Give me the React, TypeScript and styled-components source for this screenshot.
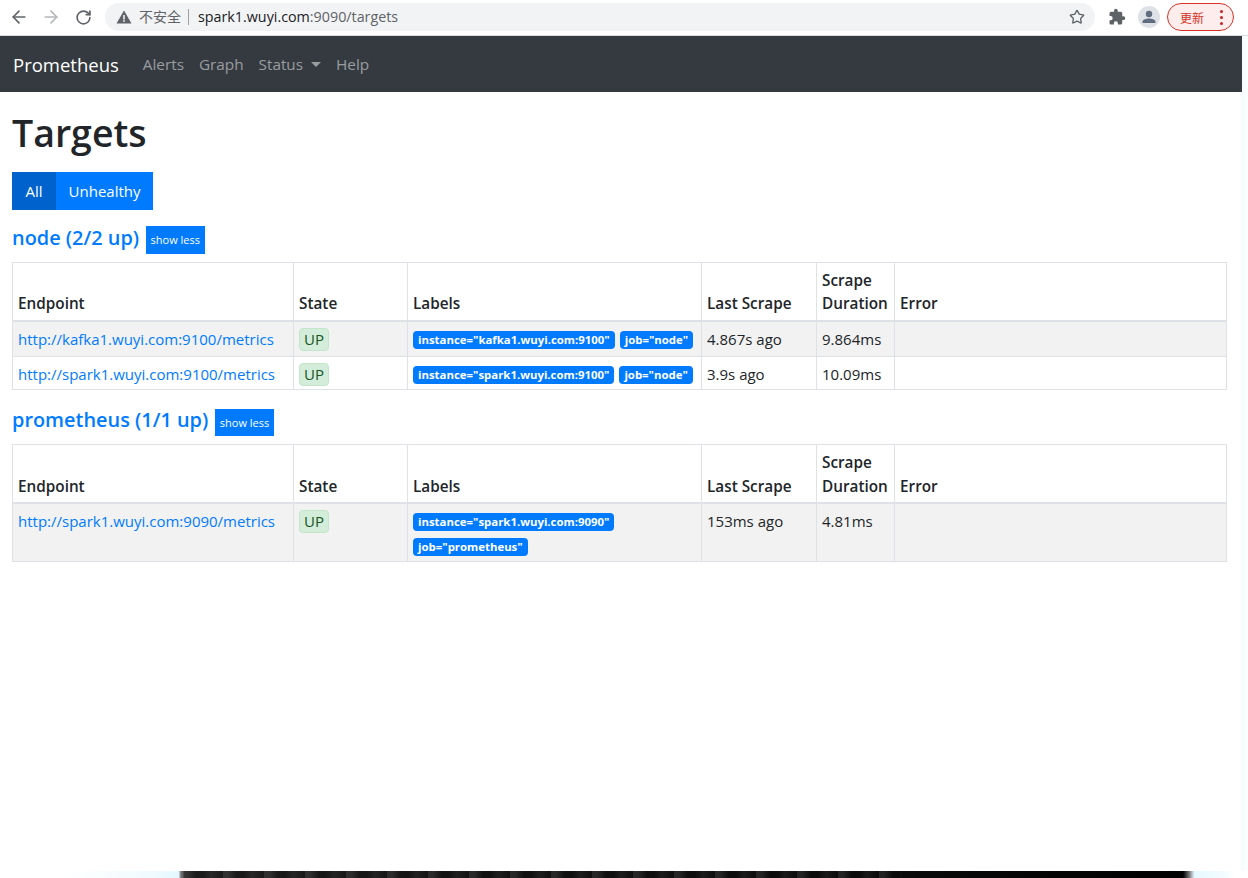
import React from 'react';
import styled, { createGlobalStyle } from 'styled-components';
import { ArrowLeft, ArrowRight, RotateCw, Star } from 'lucide-react';

const Global = createGlobalStyle`
  html, body { margin: 0; padding: 0; background: #fff; }
  body { font-family: "Open Sans", "Noto Sans CJK SC", sans-serif; font-size: 15px; color: #212529; }
  * { box-sizing: border-box; }
`;

const Page = styled.div`
  width: 1248px; height: 878px; overflow: hidden;
  display: flex; flex-direction: column;
  background: linear-gradient(90deg, #fff 1240px, #f4fcff 1242px, #fbfeff 1247px);
`;
const ChromeBar = styled.div`
  height: 36px; flex: none; display: flex; align-items: center;
  padding: 0 14px 1px 9px; background: #fff; border-bottom: 1px solid #dadce0;
`;
const NavIcon = styled.span<{ $c: string }>`
  width: 20px; height: 20px; margin-right: 12px; display: flex; align-items: center; justify-content: center; color: ${p => p.$c};
`;
const Omnibox = styled.div`
  width: 990px; height: 28px; border-radius: 14px; background: #f1f3f4;
  display: flex; align-items: center; padding: 0 10px 0 11px; font-size: 14.3px; color: #5f6368;
`;
const Warn = styled.svg`width: 16px; height: 16px; margin-right: 7px; flex: none;`;
const Insecure = styled.span`font-family: "Noto Sans CJK SC", sans-serif; font-size: 14px; color: #5f6368; margin-bottom: 2px;`;
const Sep = styled.span`width: 1px; height: 16px; background: #9aa0a6; margin: 0 9px 0 7px;`;
const Address = styled.span`margin-bottom: 2px;`;
const Host = styled.span`color: #202124;`;
const Spacer = styled.span`flex: 1;`;
const Ext = styled.svg`width: 18px; height: 18px; margin-left: 13px; flex: none;`;
const Avatar = styled.span`
  width: 22px; height: 22px; border-radius: 50%; background: #dee1e6; margin-left: 12px; flex: none;
  display: flex; align-items: center; justify-content: center;
`;
const Update = styled.span`
  width: 67px; height: 28px; margin-left: 7px; border: 1px solid #d93025; border-radius: 14px; background: #fdeeed;
  display: flex; align-items: center; justify-content: space-between; padding: 0 10px 0 12px;
  color: #d93025; font-family: "Noto Sans CJK SC", sans-serif; font-size: 12px; flex: none;
`;
const Dots = styled.span`display: flex; flex-direction: column; gap: 3px;`;
const Dot = styled.i`width: 3px; height: 3px; border-radius: 50%; background: #c5221f; display: block;`;

const Navbar = styled.nav`
  height: 56px; flex: none; width: 1242px; background: #343a40; display: flex; align-items: center; padding: 0 13px;
`;
const Brand = styled.span`color: #fff; font-size: 18.5px; margin-right: 24px;`;
const NavLink = styled.span`color: rgba(255,255,255,.5); font-size: 15.3px; margin-right: 15px; display: inline-flex; align-items: center;`;
const Caret = styled.i`
  display: inline-block; margin-left: 8px; border-top: 5px solid; border-left: 5px solid transparent; border-right: 5px solid transparent;
`;

const Main = styled.main`padding: 0 21px 0 12px; width: 1239px;`;
const Title = styled.h1`margin: 16px 0 14px; font-size: 37.5px; line-height: 50px; font-weight: 600; color: #212529;`;
const Group = styled.div`display: flex; height: 38px; width: max-content;`;
const Toggle = styled.span<{ $active?: boolean }>`
  height: 38px; display: flex; align-items: center; color: #fff; font-size: 15px;
  padding: 0 ${p => (p.$active ? '13.5px' : '12.5px')};
  background: ${p => (p.$active ? '#0062cc' : '#007bff')};
`;
const Head = styled.div`display: flex; align-items: center; margin-top: 16px; height: 27.5px;`;
const JobTitle = styled.a`color: #007bff; font-size: 19.9px; font-weight: 600; line-height: 27px; margin-bottom: 5px;`;
const Less = styled.span`
  margin-left: 6.5px; height: 27.5px; padding: 0 5px; display: flex; align-items: center; background: #007bff; color: #fff; font-size: 11px;
`;
const Table = styled.table`
  width: 1215px; table-layout: fixed; border-collapse: collapse; margin-top: 8px; margin-bottom: 18.5px;
  border: 1px solid #dee2e6;
`;
const Th = styled.th<{ $w?: number }>`
  width: ${p => (p.$w ? `${p.$w}px` : 'auto')}; padding: 6px 5px 4px; text-align: left; vertical-align: bottom; font-weight: 600;
  border: 1px solid #dee2e6; border-bottom-width: 2px; font-size: 15.3px; line-height: 23.5px; color: #212529;
`;
const Tr = styled.tr<{ $odd?: boolean }>`
  background: ${p => (p.$odd ? '#f2f2f2' : '#fff')};
  height: ${p => (p.$odd ? '36px' : '33px')};
`;
const Td = styled.td`padding: 5px 5px 3px; vertical-align: top; border: 1px solid #dee2e6; font-size: 15px; line-height: 24px;`;
const Endpoint = styled.a`color: #007bff;`;
const Up = styled.span`
  display: block; width: 30px; height: 23px; line-height: 21px; text-align: center; background: #d4edda; color: #155724;
  border: 1px solid #c3e6cb; border-radius: 4px; margin-top: 1px;
`;
const Labels = styled.div`display: flex; flex-wrap: wrap; gap: 7px 5px; margin: 4px 0 2px;`;
const Label = styled.span`
  display: inline-block; height: 18px; line-height: 18px; padding: 0 5px; background: #007bff; color: #fff; font-size: 11.4px; font-weight: 700;
  border-radius: 4px; white-space: nowrap;
`;
const Fill = styled.div`flex: 1;`;
const Strip = styled.div`
  height: 7px; flex: none;
  background:
    repeating-linear-gradient(90deg, rgba(255,255,255,.1) 0 5px, rgba(255,255,255,0) 14px 21px, rgba(255,255,255,.06) 29px, rgba(255,255,255,0) 41px) 182px 0 / 720px 100% no-repeat,
    linear-gradient(90deg, #fff 5%, #f0fbff 12%, #e4f7ff 14.3%, #777 14.5%, #1c1c1c 14.8%, #111 40%, #0a0a0a 72%, #000 94.8%, #777 95.3%, #e6f8ff 95.7%, #f2fcff 98%, #fff 99%);
`;

const targets = [
  { job: 'node (2/2 up)', rows: [
    ['http://kafka1.wuyi.com:9100/metrics', ['instance="kafka1.wuyi.com:9100"', 'job="node"'], '4.867s ago', '9.864ms'],
    ['http://spark1.wuyi.com:9100/metrics', ['instance="spark1.wuyi.com:9100"', 'job="node"'], '3.9s ago', '10.09ms'],
  ] },
  { job: 'prometheus (1/1 up)', rows: [
    ['http://spark1.wuyi.com:9090/metrics', ['instance="spark1.wuyi.com:9090"', 'job="prometheus"'], '153ms ago', '4.81ms'],
  ] },
] as { job: string; rows: [string, string[], string, string][] }[];

export default function App() {
  return (
    <Page>
      <Global />
      <ChromeBar>
        <NavIcon $c="#5f6368"><ArrowLeft size={20} /></NavIcon>
        <NavIcon $c="#b4b7ba"><ArrowRight size={20} /></NavIcon>
        <NavIcon $c="#5f6368"><RotateCw size={17} strokeWidth={2.4} /></NavIcon>
        <Omnibox>
          <Warn viewBox="0 0 16 16"><path d="M8 1.5 15.5 14.5H.5Z" fill="#5f6368" /><rect x="7.2" y="6" width="1.6" height="4.5" fill="#f1f3f4" /><rect x="7.2" y="11.2" width="1.6" height="1.6" fill="#f1f3f4" /></Warn>
          <Insecure>不安全</Insecure>
          <Sep />
          <Address><Host>spark1.wuyi.com</Host>:9090/targets</Address>
          <Spacer />
          <Star size={16} color="#5f6368" strokeWidth={2} />
        </Omnibox>
        <Ext viewBox="0 0 24 24"><path fill="#5f6368" d="M20.5 11H19V7a2 2 0 0 0-2-2h-4V3.5a2.5 2.5 0 0 0-5 0V5H4a2 2 0 0 0-2 2v3.8h1.5a2.7 2.7 0 0 1 0 5.4H2V20a2 2 0 0 0 2 2h3.8v-1.5a2.7 2.7 0 0 1 5.4 0V22H17a2 2 0 0 0 2-2v-4h1.5a2.5 2.5 0 0 0 0-5z" /></Ext>
        <Avatar>
          <svg width="16" height="16" viewBox="0 0 16 16"><circle cx="8" cy="5" r="3.2" fill="#5f6b7f" /><path d="M1.5 14v-1.3C1.5 10.4 5.5 9.5 8 9.5s6.5.9 6.5 3.2V14z" fill="#5f6b7f" /></svg>
        </Avatar>
        <Update>更新<Dots><Dot /><Dot /><Dot /></Dots></Update>
      </ChromeBar>
      <Navbar>
        <Brand>Prometheus</Brand>
        <NavLink>Alerts</NavLink>
        <NavLink>Graph</NavLink>
        <NavLink>Status<Caret /></NavLink>
        <NavLink>Help</NavLink>
      </Navbar>
      <Main>
        <Title>Targets</Title>
        <Group>
          <Toggle $active>All</Toggle>
          <Toggle>Unhealthy</Toggle>
        </Group>
        {targets.map(t => (
          <section key={t.job}>
            <Head><JobTitle>{t.job}</JobTitle><Less>show less</Less></Head>
            <Table>
              <thead>
                <tr>
                  <Th $w={281}>Endpoint</Th>
                  <Th $w={114}>State</Th>
                  <Th $w={294}>Labels</Th>
                  <Th $w={115}>Last Scrape</Th>
                  <Th $w={78}>Scrape Duration</Th>
                  <Th>Error</Th>
                </tr>
              </thead>
              <tbody>
                {t.rows.map(([url, labels, last, dur], i) => (
                  <Tr key={url} $odd={i % 2 === 0}>
                    <Td><Endpoint>{url}</Endpoint></Td>
                    <Td><Up>UP</Up></Td>
                    <Td><Labels>{labels.map(l => <Label key={l}>{l}</Label>)}</Labels></Td>
                    <Td>{last}</Td>
                    <Td>{dur}</Td>
                    <Td />
                  </Tr>
                ))}
              </tbody>
            </Table>
          </section>
        ))}
      </Main>
      <Fill />
      <Strip />
    </Page>
  );
}
